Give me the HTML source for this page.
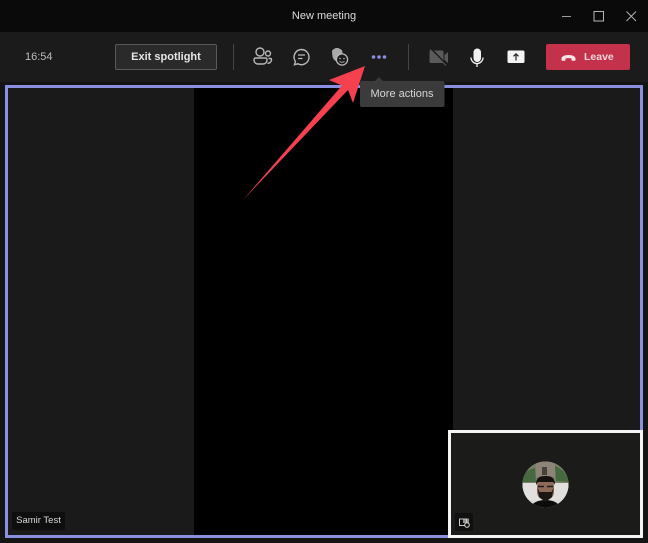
<!DOCTYPE html>
<html>
<head>
<meta charset="utf-8">
<style>
html,body{margin:0;padding:0;background:#131413;}
#a{position:relative;width:648px;height:543px;overflow:hidden;background:#131413;font-family:"Liberation Sans",sans-serif;filter:blur(.35px);}
#a div{position:absolute;box-sizing:border-box;white-space:nowrap;}
svg{position:absolute;left:0;top:0;}
</style>
</head>
<body>
<div id="a">
<div style="left:-2px;top:-2px;width:652px;height:34px;background:#0a0a0a"></div>
<div style="left:-2px;top:32px;width:652px;height:50px;background:#1a1b1a"></div>
<div style="left:0;top:9px;width:648px;text-align:center;color:#dcdcdc;font-size:11px;line-height:14px;font-weight:400">New meeting</div>
<div style="left:25px;top:50px;color:#bcbcbc;font-size:11px;line-height:14px">16:54</div>
<div style="left:115px;top:44px;width:102px;height:26px;background:#2a2a2a;border:1px solid #5a5a5a;border-radius:2px;color:#e6e6e6;font-size:11px;font-weight:700;line-height:24px;text-align:center">Exit spotlight</div>
<div style="left:233px;top:44px;width:1px;height:26px;background:#444"></div>
<div style="left:408px;top:44px;width:1px;height:26px;background:#444"></div>
<div style="left:546px;top:44px;width:84px;height:26px;background:#c4314b;border-radius:2px;color:#f0d5da;font-size:10.5px;font-weight:700;line-height:26px;padding-left:38px">Leave</div>

<!-- stage -->
<div style="left:5px;top:85px;width:638px;height:453px;border:3px solid #8b8fe0;background:#1a1a1a"></div>
<div style="left:194px;top:88px;width:259px;height:447px;background:#000"></div>
<div style="left:12px;top:512px;width:53px;height:18px;background:#0e0e0e;border-radius:2px;color:#d8d8d8;font-size:9.5px;line-height:18px;text-align:center">Samir Test</div>

<!-- self view -->
<div style="left:448px;top:430px;width:195px;height:108px;border:3px solid #f4f4f4;background:#1b1c1a"></div>
<div style="left:455px;top:513px;width:18px;height:18px;background:#0f100f;border-radius:2px"></div>

<svg width="648" height="543" viewBox="0 0 648 543" fill="none">
<!-- window controls -->
<path d="M562 16.500H571" stroke="#9a9a9a" stroke-width="1"/>
<rect x="594" y="11.500" width="9.500" height="9.500" stroke="#b5b5b5" stroke-width="1"/>
<path d="M626.500 11.500L636 21M636 11.500L626.500 21" stroke="#b0b0b0" stroke-width="1"/>

<!-- people -->
<g stroke="#b8b8b8" stroke-width="1.400">
<circle cx="260" cy="52" r="4"/>
<circle cx="268" cy="53.500" r="2.500"/>
<path d="M255.500 58h10a1.500 1.500 0 0 1 1.500 1.500v.5a4 4 0 0 1-4 4h-5a4 4 0 0 1-4-4v-.5a1.500 1.500 0 0 1 1.500-1.500z"/>
<path d="M268.500 58.500h2a1 1 0 0 1 1 1v.5a3.500 3.500 0 0 1-4 3.200"/>
<!-- chat -->
<path d="M301.500 49.500a7.600 7.600 0 1 1-3.700 14.300l-3.300.9.900-3.300a7.600 7.600 0 0 1 6.100-11.900z"/>
<path d="M298 55h7M298 58.500h4.500" stroke-width="1.200"/>
</g>
<!-- reactions -->
<path d="M334 49c2-1.500 4-1.500 6 0 2 .5 2.500 2 2.500 4v2.500c-2 1-4 3-4.500 6-2.500 0-5-2-5.500-5l-.5-4.500c0-1.500.5-2.500 2-3z" fill="#aaa"/>
<circle cx="342" cy="59.500" r="5.600" fill="#1a1b1a" stroke="#b8b8b8" stroke-width="1.300"/>
<circle cx="340" cy="58.500" r=".8" fill="#b8b8b8"/>
<circle cx="344" cy="58.500" r=".8" fill="#b8b8b8"/>
<path d="M339.500 61.300q2.500 2 5 0" stroke="#b8b8b8" stroke-width=".9"/>
<!-- more -->
<circle cx="373.500" cy="57" r="1.800" fill="#8b8fe0"/>
<circle cx="379" cy="57" r="1.800" fill="#8b8fe0"/>
<circle cx="384.500" cy="57" r="1.800" fill="#8b8fe0"/>
<!-- video off -->
<path d="M431 50.500h11a1.500 1.500 0 0 1 1.500 1.500v9.500a1.500 1.500 0 0 1-1.500 1.500h-11a1.500 1.500 0 0 1-1.500-1.500V52a1.500 1.500 0 0 1 1.500-1.500z" fill="#5a5a5a"/>
<path d="M444.500 55l3.500-3v11l-3.500-3z" fill="#5a5a5a"/>
<path d="M431 48.500L446 64" stroke="#1a1b1a" stroke-width="1.500"/>
<path d="M430 49.500L446 65.500" stroke="#5a5a5a" stroke-width="1"/>
<!-- mic -->
<rect x="473.500" y="48.500" width="7.500" height="13.500" rx="3.750" fill="#f2f2f2"/>
<path d="M471 57.500a6 6 0 0 0 12 0M477 63.500v3.500" stroke="#f2f2f2" stroke-width="1.300"/>
<!-- share -->
<rect x="507.500" y="50.500" width="17" height="12.500" rx="1.500" fill="#f4f4f4"/>
<path d="M516 60.500v-6.500M513.500 56.300l2.500-2.500 2.500 2.500" stroke="#222" stroke-width="1.200"/>
<!-- leave phone -->
<path d="M561.500 58.500c0-1.700 2.500-3.500 7-3.500s7 1.800 7 3.500v1.500c0 .5-.5 .8-1 .8h-2c-.5 0-1-.3-1-.8v-1.500c-1-.5-5-.5-6 0v1.500c0 .5-.5 .8-1 .8h-2c-.5 0-1-.3-1-.8z" fill="#f4e6e9"/>
<!-- avatar -->
<defs><clipPath id="c"><circle cx="545.500" cy="484.500" r="23"/></clipPath></defs>
<g clip-path="url(#c)">
<rect x="520" y="460" width="52" height="50" fill="#dcdad5"/>
<rect x="520" y="460" width="52" height="24" fill="#7a8168"/>
<path d="M522 482c1-9 6-13 13-14l1 14zM555 466c6 2 12 7 14 16l-13-1z" fill="#46693f"/>
<rect x="536" y="460" width="19" height="17" fill="#8d8478"/>
<rect x="542" y="467" width="5" height="8" fill="#4a403a"/>
<path d="M522 483h48v17h-48z" fill="#e2e0dc"/>
<path d="M530 509c1-6 8-9 15.500-9s14 3 15.500 9v4h-31z" fill="#0b0b0b"/>
<rect x="537" y="478" width="17" height="22" rx="8" fill="#8e6b58"/>
<path d="M536 485c0-7 3-9 9.500-9s9.500 2 9.500 9l-2-3h-15z" fill="#15110f"/>
<path d="M537.500 488l1.500 9 6.500 5 6.500-5 1.500-9-2 4h-12z" fill="#1d1714"/>
<path d="M538 486.500h6M547 486.500h6" stroke="#1c1c1c" stroke-width="1.500"/>
</g>
<!-- self-view icon -->
<rect x="459.500" y="519" width="7" height="6.500" stroke="#c8c8c8" stroke-width="1"/>
<rect x="463" y="518.500" width="6" height="4.500" fill="#c8c8c8" opacity=".7"/>
<circle cx="467" cy="525" r="2.300" fill="#0f100f" stroke="#d8d8d8" stroke-width="1"/>
<!-- tooltip -->
<path d="M375 81l4-4 4 4z" fill="#3b3b3b"/>
<rect x="360" y="81" width="84.500" height="26" rx="2" fill="#3b3b3b"/>
<!-- arrow -->
<path d="M365 66L329 80 342 85.500 243 200 348 90 353 103z" fill="#f4404f"/>
</svg>
<div style="left:360px;top:81px;width:84px;height:26px;color:#d6d6d6;font-size:11px;line-height:26px;text-align:center">More actions</div>
</div>
</body>
</html>
